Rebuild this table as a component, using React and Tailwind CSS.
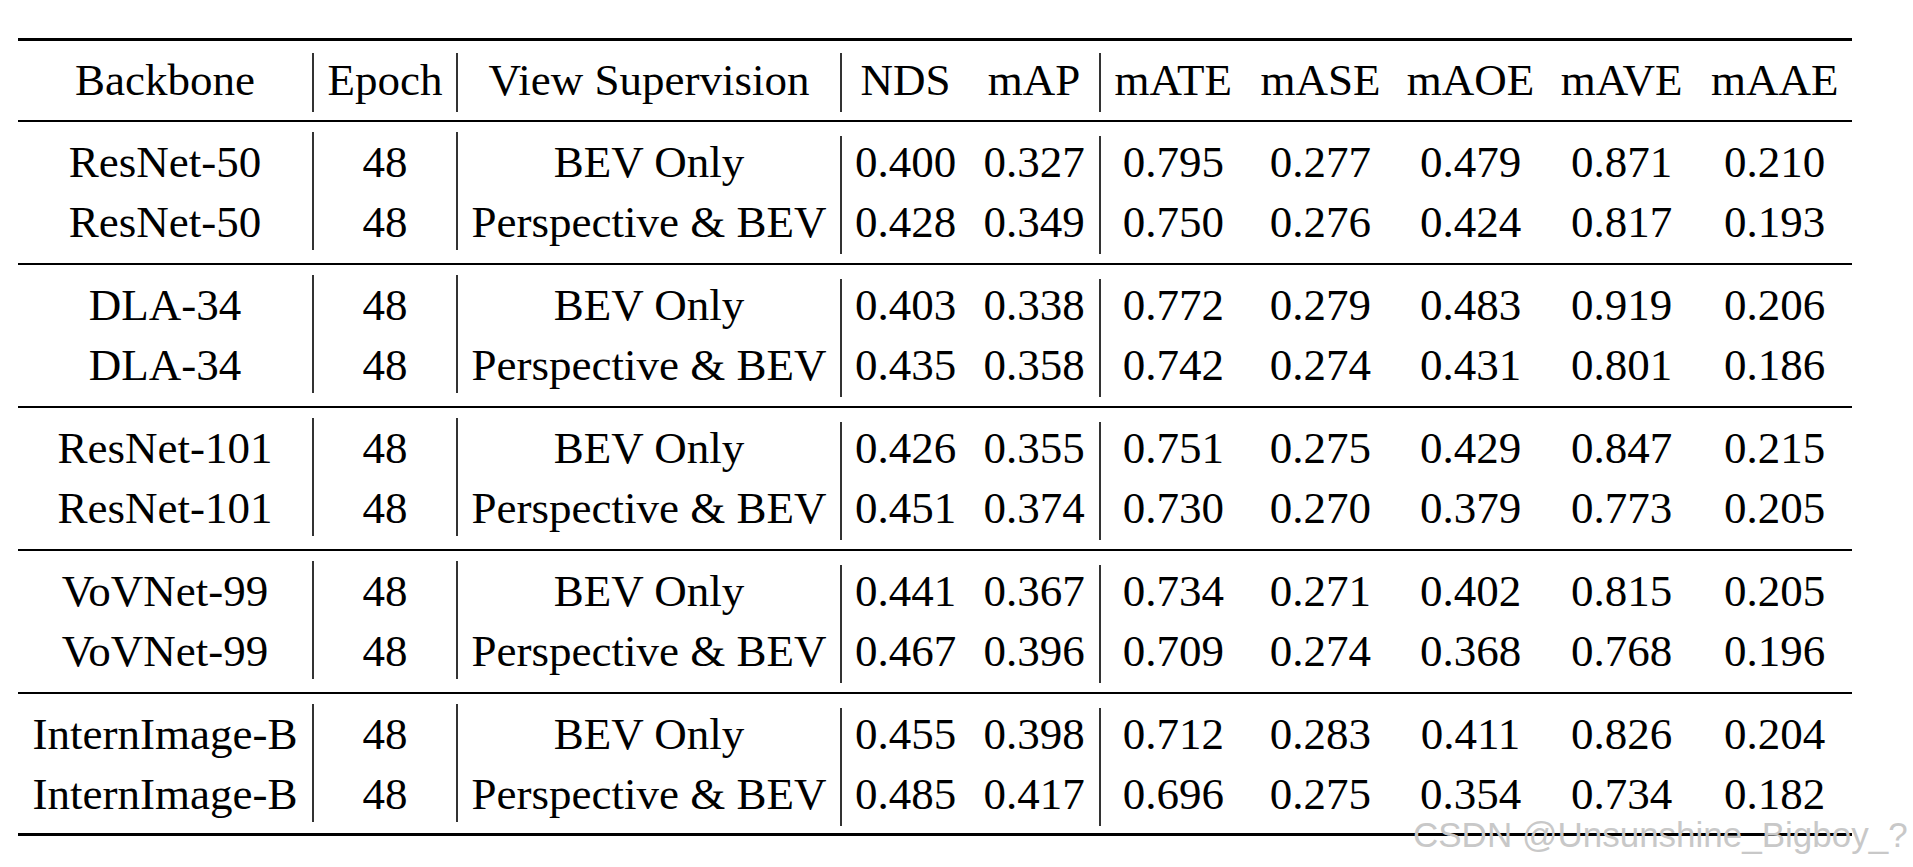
import React from "react";

const groups = [
  {
    name: "ResNet-50",
    rows: [
      ["BEV Only", "0.400", "0.327", "0.795", "0.277", "0.479", "0.871", "0.210"],
      ["Perspective & BEV", "0.428", "0.349", "0.750", "0.276", "0.424", "0.817", "0.193"],
    ],
  },
  {
    name: "DLA-34",
    rows: [
      ["BEV Only", "0.403", "0.338", "0.772", "0.279", "0.483", "0.919", "0.206"],
      ["Perspective & BEV", "0.435", "0.358", "0.742", "0.274", "0.431", "0.801", "0.186"],
    ],
  },
  {
    name: "ResNet-101",
    rows: [
      ["BEV Only", "0.426", "0.355", "0.751", "0.275", "0.429", "0.847", "0.215"],
      ["Perspective & BEV", "0.451", "0.374", "0.730", "0.270", "0.379", "0.773", "0.205"],
    ],
  },
  {
    name: "VoVNet-99",
    rows: [
      ["BEV Only", "0.441", "0.367", "0.734", "0.271", "0.402", "0.815", "0.205"],
      ["Perspective & BEV", "0.467", "0.396", "0.709", "0.274", "0.368", "0.768", "0.196"],
    ],
  },
  {
    name: "InternImage-B",
    rows: [
      ["BEV Only", "0.455", "0.398", "0.712", "0.283", "0.411", "0.826", "0.204"],
      ["Perspective & BEV", "0.485", "0.417", "0.696", "0.275", "0.354", "0.734", "0.182"],
    ],
  },
];

// column widths inside the two metric blocks
const ndsCols = ["w-[128px]", "w-[131px]"];
const errCols = ["w-[145px]", "w-[150px]", "w-[151px]", "w-[152px]", "w-[155px]"];

const vline = "border-l-2 border-[#333]";

function Sections({ backbone, epoch, view, nds, errs, tall }) {
  // tall: two stacked lines per cell (body), otherwise header
  const h = tall ? "h-[118px]" : "h-[59px]";
  const txt = tall ? "-mt-[4px] leading-[60px]" : "pt-[2px] leading-[50px]";
  return (
    <div className="flex">
      <div className={`w-[294px] ${h} text-center ${txt}`}>{backbone}</div>
      <div className={`w-[144px] ${h} ${vline} text-center ${txt}`}>{epoch}</div>
      <div className={`w-[384px] ${h} ${vline} text-center ${txt}`}>{view}</div>
      <div className={`w-[259px] ${h} ${vline} flex`}>
        {nds.map((c, i) => (
          <div key={i} className={`${ndsCols[i]} text-center ${txt}`}>
            {c}
          </div>
        ))}
      </div>
      <div className={`w-[753px] ${h} ${vline} flex`}>
        {errs.map((c, i) => (
          <div key={i} className={`${errCols[i]} text-center ${txt}`}>
            {c}
          </div>
        ))}
      </div>
    </div>
  );
}

const two = (a, b) => (
  <>
    <div>{a}</div>
    <div>{b}</div>
  </>
);

export default function App() {
  return (
    <div className="relative h-[867px] w-full overflow-hidden bg-white pl-[18px] pt-[38px] font-['Liberation_Serif','Times_New_Roman',serif] text-[45px] text-black">
      <div className="w-[1834px]">
        {/* header */}
        <div className="border-t-[3px] border-black pb-[8px] pt-[12px]">
          <Sections
            backbone="Backbone"
            epoch="Epoch"
            view="View Supervision"
            nds={["NDS", "mAP"]}
            errs={["mATE", "mASE", "mAOE", "mAVE", "mAAE"]}
          />
        </div>

        {groups.map((g, gi) => (
          <div
            key={g.name}
            className={`border-t-2 border-black pt-[14px] ${gi === groups.length - 1 ? "pb-[7px]" : "pb-[9px]"}`}
          >
            <Sections
              tall
              backbone={two(g.name, g.name)}
              epoch={two("48", "48")}
              view={two(g.rows[0][0], g.rows[1][0])}
              nds={[1, 2].map((k) => two(g.rows[0][k], g.rows[1][k]))}
              errs={[3, 4, 5, 6, 7].map((k) => two(g.rows[0][k], g.rows[1][k]))}
            />
          </div>
        ))}
        <div className="border-t-[3px] border-black" />
      </div>

      {/* watermark */}
      <div className="absolute left-[1413px] top-[817px] whitespace-nowrap font-['Liberation_Sans',Arial,sans-serif] text-[35px] leading-none text-[#c8c8c8]">
        CSDN @Unsunshine_Bigboy_?
      </div>
    </div>
  );
}
